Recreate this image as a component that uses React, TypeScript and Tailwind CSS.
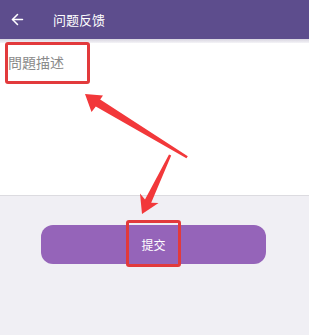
import { ArrowLeft } from "lucide-react";

export default function App() {
  return (
    <main
      className="relative w-[309px] h-[335px] overflow-hidden bg-[#f0eff4]"
      style={{ fontFamily: '"Noto Sans CJK SC", "Noto Sans", sans-serif' }}
    >
      {/* Header */}
      <div className="h-[39px] bg-[#5d4d8d] flex items-center">
        <ArrowLeft className="ml-[9px] w-[17px] h-[17px] text-white" strokeWidth={2.2} />
        <span className="ml-[27px] text-[13px] text-white leading-none">问题反馈</span>
      </div>
      <div className="h-[4px] bg-gradient-to-b from-[#d8d5e0] to-[#f4f3f7]" />

      {/* Textarea */}
      <div className="h-[153px] bg-white border-b border-[#dcdbe0] px-[8px] pt-[6px]">
        <span className="text-[14px] text-[#8a8a8a] leading-none">問題描述</span>
      </div>

      {/* Submit */}
      <button className="mt-[29px] ml-[41px] w-[225px] h-[39px] rounded-[12px] bg-[#9564b9] text-white text-[12px] flex items-center justify-center">
        提交
      </button>

      {/* Annotations */}
      <div className="absolute left-[5px] top-[42px] w-[85px] h-[42px] border-[3px] border-[#e23a3c] rounded-[3px]" />
      <div className="absolute left-[126px] top-[220px] w-[55px] h-[47px] border-[3px] border-[#e23a3c] rounded-[3px]" />
      <svg className="absolute inset-0" width="309" height="335" viewBox="0 0 309 335">
        <polygon
          fill="#f2383a"
          points="85,94 103,95.5 100.2,99.4 187.8,156.2 186.4,158.2 95.8,106.6 91.5,112"
        />
        <polygon
          fill="#f2383a"
          points="142,214 140,193.5 145,199.6 169,154.6 171.2,155.5 151.2,202.8 158.5,203"
        />
      </svg>
    </main>
  );
}
